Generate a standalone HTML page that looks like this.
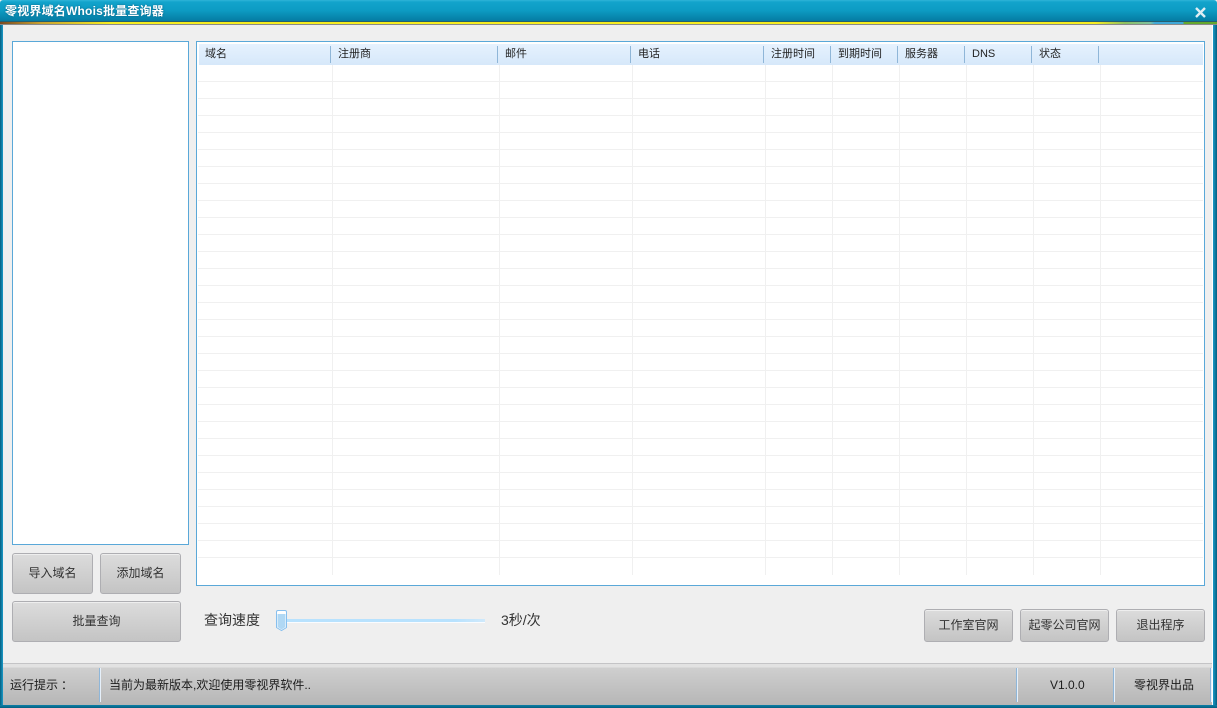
<!DOCTYPE html>
<html><head><meta charset="utf-8"><style>
*{box-sizing:border-box}
html,body{margin:0;padding:0}
body{width:1217px;height:708px;overflow:hidden;position:relative;background:#efefef;font-family:"Liberation Sans","Noto Sans CJK SC",sans-serif;color:#222}
.a{position:absolute}
.btn{position:absolute;border:1px solid #aeaeb2;border-radius:3px;background:linear-gradient(#dcdcdc,#c4c4c4);box-shadow:inset 0 1px 0 #eee;color:#333;font-size:12px;text-align:center}
.hd{position:absolute;top:48px;font-size:11px;line-height:13px;color:#222}
.sep{position:absolute;top:46px;width:1px;height:17px;background:#8fb6d8}
.vl{position:absolute;top:65px;width:1px;height:510px;background:#f0f0f0}
.st{position:absolute;font-size:12px;line-height:16px;top:677px;color:#1c1c1c}
.ss{position:absolute;top:668px;width:1px;height:34px;background:#e6f0fa;box-shadow:-1px 0 0 #8fb6d8}
</style></head><body>
<!-- frame -->
<div class="a" style="left:0;top:0;width:1217px;height:22px;background:linear-gradient(#2fb4d8 0,#12a4cc 2px,#0d9cc4 10px,#04789f 22px);border-radius:3px 3px 0 0"></div>
<div class="a" style="left:0;top:21px;width:1217px;height:1px;background:#245f70"></div>
<div class="a" style="left:0;top:22px;width:1217px;height:2px;background:linear-gradient(90deg,#7a4a20 0,#c8a030 40px,#f6ec20 110px,#f6ec20 1095px,#8cc060 1125px,#7cc0a0 1150px,#3ea8d8 1155px,#3ea8d8 1183px,#64a82c 1184px,#64a82c 1217px)"></div>
<div class="a" style="left:0;top:24px;width:1217px;height:1px;background:#8a8a8a"></div>
<div class="a" style="left:0;top:25px;width:3px;height:683px;background:linear-gradient(90deg,#045f80,#1a9ac8)"></div>
<div class="a" style="right:0;top:25px;width:5px;height:683px;background:linear-gradient(90deg,#fff 0,#fff 1px,#1a9ac8 1px,#045f80)"></div>
<div class="a" style="left:5px;top:3px;font-size:12px;letter-spacing:.2px;font-weight:bold;line-height:17px;color:#fff;text-shadow:0 0 2px #0a5f80">零视界域名Whois批量查询器</div>
<svg class="a" style="left:1195px;top:7px" width="11" height="11" viewBox="0 0 11 11"><path d="M1 1L10 10M10 1L1 10" stroke="#dfeef4" stroke-width="2.4" fill="none"/></svg>

<!-- list box -->
<div class="a" style="left:12px;top:41px;width:177px;height:504px;background:#fff;border:1px solid #5aa8d8"></div>

<!-- table -->
<div class="a" style="left:196px;top:41px;width:1009px;height:545px;background:#fff;border:1px solid #5aa8d8"></div>
<div class="a" style="left:199px;top:44px;width:1004px;height:21px;background:linear-gradient(#e6f2fe,#d6e8fa)"></div>
<div class="hd" style="left:205px">域名</div><div class="sep" style="left:330px"></div>
<div class="hd" style="left:338px">注册商</div><div class="sep" style="left:497px"></div>
<div class="hd" style="left:505px">邮件</div><div class="sep" style="left:630px"></div>
<div class="hd" style="left:638px">电话</div><div class="sep" style="left:763px"></div>
<div class="hd" style="left:771px">注册时间</div><div class="sep" style="left:830px"></div>
<div class="hd" style="left:838px">到期时间</div><div class="sep" style="left:897px"></div>
<div class="hd" style="left:905px">服务器</div><div class="sep" style="left:964px"></div>
<div class="hd" style="left:972px">DNS</div><div class="sep" style="left:1031px"></div>
<div class="hd" style="left:1039px">状态</div><div class="sep" style="left:1098px"></div>
<div class="vl" style="left:332px"></div><div class="vl" style="left:499px"></div><div class="vl" style="left:632px"></div><div class="vl" style="left:765px"></div><div class="vl" style="left:832px"></div><div class="vl" style="left:899px"></div><div class="vl" style="left:966px"></div><div class="vl" style="left:1033px"></div><div class="vl" style="left:1100px"></div>
<div class="a" style="left:198px;top:81px;width:1005px;height:493px;background:repeating-linear-gradient(#f0f0f0 0,#f0f0f0 1px,transparent 1px,transparent 17px)"></div>

<!-- left buttons -->
<div class="btn" style="left:12px;top:553px;width:81px;height:41px;line-height:39px">导入域名</div>
<div class="btn" style="left:100px;top:553px;width:81px;height:41px;line-height:39px">添加域名</div>
<div class="btn" style="left:12px;top:601px;width:169px;height:41px;line-height:39px">批量查询</div>

<!-- slider -->
<div class="a" style="left:204px;top:611px;font-size:14px;line-height:18px;color:#333">查询速度</div>
<div class="a" style="left:285px;top:619px;width:200px;height:3px;background:linear-gradient(90deg,#b8e2fe,#b8e2fe 85%,#cfe9fb)"></div>
<div class="a" style="left:285px;top:622px;width:200px;height:1px;background:#fafcff"></div>
<svg class="a" style="left:276px;top:610px" width="11" height="22" viewBox="0 0 11 22"><path d="M.5 2Q.5 .5 2 .5H9Q10.5 .5 10.5 2V17.5L5.5 20.5L.5 17.5Z" fill="#fff" stroke="#86bfee"/><path d="M1.5 4H9.5V17L5.5 19.5L1.5 17Z" fill="#b0d8f4"/></svg>
<div class="a" style="left:501px;top:611px;font-size:14px;line-height:18px;color:#333">3秒/次</div>

<!-- right buttons -->
<div class="btn" style="left:924px;top:609px;width:89px;height:33px;line-height:31px">工作室官网</div>
<div class="btn" style="left:1020px;top:609px;width:89px;height:33px;line-height:31px">起零公司官网</div>
<div class="btn" style="left:1116px;top:609px;width:89px;height:33px;line-height:31px">退出程序</div>

<!-- status bar -->
<div class="a" style="left:3px;top:663px;width:1209px;height:1px;background:#c4c4c6"></div>
<div class="a" style="left:3px;top:664px;width:1209px;height:41px;background:linear-gradient(#e2e2e2 0,#e2e2e2 3px,#cfcfcf 4px,#b6b6b6 100%)"></div>
<div class="a" style="left:0;top:705px;width:1217px;height:3px;background:linear-gradient(#0b7fa8,#045f80)"></div>
<div class="st" style="left:10px">运行提示<span style="margin-left:3px">：</span></div>
<div class="ss" style="left:100px"></div>
<div class="st" style="left:109px">当前为最新版本,欢迎使用零视界软件..</div>
<div class="ss" style="left:1017px"></div>
<div class="st" style="left:1050px">V1.0.0</div>
<div class="ss" style="left:1114px"></div>
<div class="st" style="left:1134px">零视界出品</div>
<div class="ss" style="left:1211px"></div>
</body></html>
